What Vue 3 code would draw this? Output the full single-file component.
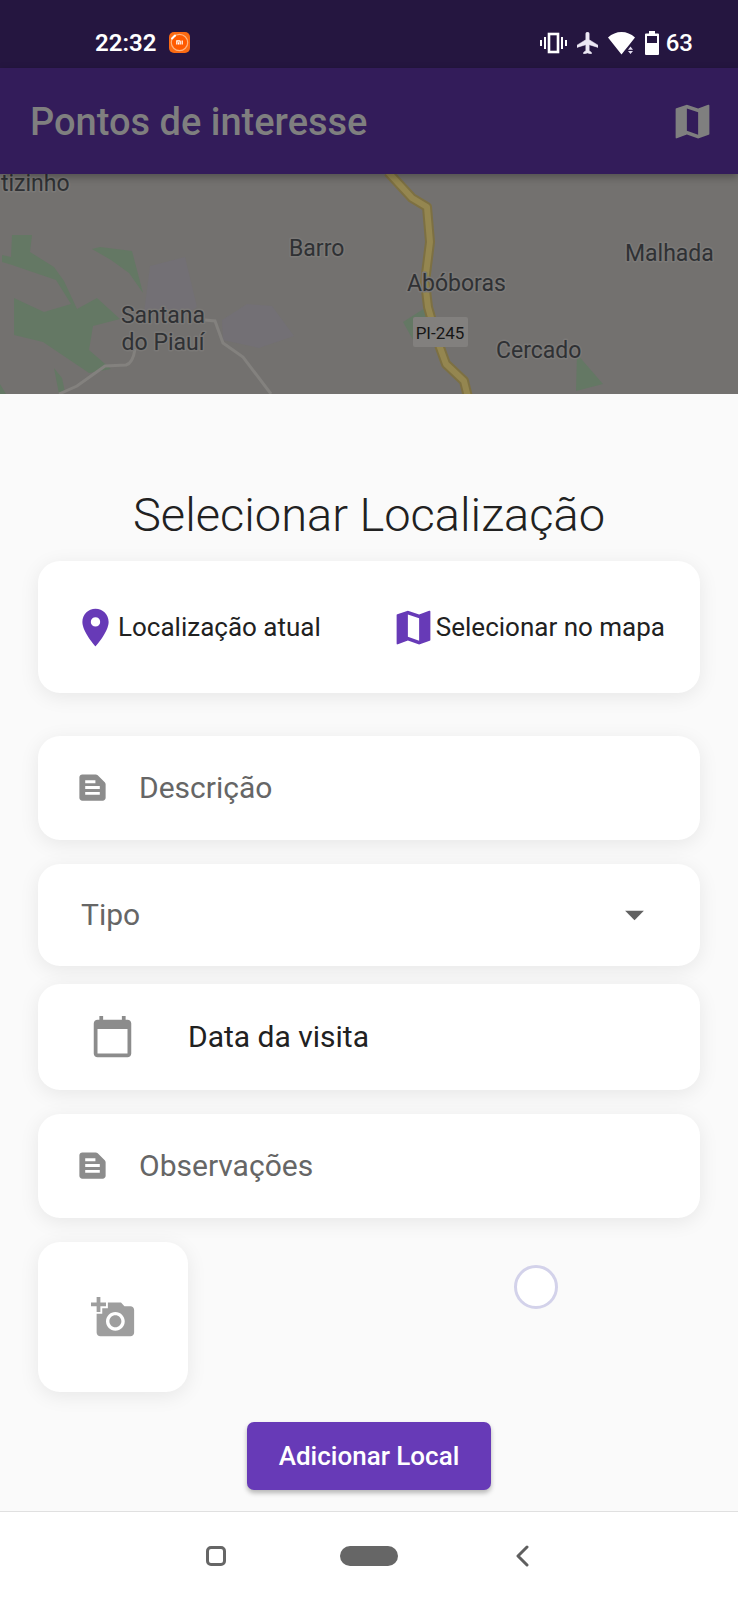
<script setup>
import { ref } from 'vue'

const descricao = ref('')
const tipo = ref('')
const observacoes = ref('')

const mapPath = 'M20.5 3l-.16.03L15 5.1 9 3 3.36 4.9c-.21.07-.36.25-.36.48V20.5c0 .28.22.5.5.5l.16-.03L9 18.9l6 2.1 5.64-1.9c.21-.07.36-.25.36-.48V3.5c0-.28-.22-.5-.5-.5zM15 19l-6-2.11V5l6 2.11V19z'
const notePath = 'M20.41 8.41l-4.83-4.83C15.21 3.21 14.7 3 14.17 3H5c-1.1 0-2 .9-2 2v14c0 1.1.9 2 2 2h14c1.1 0 2-.9 2-2V9.83c0-.53-.21-1.04-.59-1.42zM7 7h7v2H7V7zm10 10H7v-2h10v2zm0-4H7v-2h10v2z'
</script>

<template>
  <div class="screen">
    <header class="status-bar">
      <div class="status-left">
        <span class="status-text">22:32</span>
        <svg class="mi-icon" viewBox="0 0 21 21" aria-hidden="true">
          <rect width="21" height="21" rx="5" fill="#fb6a12" />
          <circle cx="10.500" cy="10.500" r="8.200" fill="#ff5a00" stroke="#ffb37e" stroke-width="1.200" />
          <path d="M3 6.500L6 3.500" stroke="#fff" stroke-width="2" stroke-linecap="round" />
          <path d="M7.800 12.500V8.800h2.600q.8 0 .8.800v2.900M9.500 10.300v2.200M13.200 8.500v4" fill="none" stroke="#fff" stroke-width="1.200" />
        </svg>
      </div>
      <div class="status-right">
        <div class="status-icons">
          <svg class="i-vibrate" viewBox="0 0 27 22" aria-hidden="true">
            <rect x="9" y="2" width="9" height="18" fill="none" stroke="#fff" stroke-width="2.600" />
            <path d="M1 8v6M5 5v12M22 5v12M26 8v6" stroke="#fff" stroke-width="2" />
          </svg>
          <svg class="i-plane" viewBox="2 2 19 20" preserveAspectRatio="none" aria-hidden="true">
            <path fill="#ece8f4" stroke="#ece8f4" stroke-width=".500" d="M21 16v-2l-8-5V3.500c0-.83-.67-1.500-1.500-1.500S10 2.670 10 3.500V9l-8 5v2l8-2.500V19l-2 1.500V22l3.500-1 3.500 1v-1.500L13 19v-5.500l8 2.500z" />
          </svg>
          <svg class="i-wifi" viewBox="0 0 27 24" aria-hidden="true">
            <path fill="#fff" d="M13.500 23.500L0 6.500Q6 1 13.500 1T27 6.500l-6.500 8.200-3.500 4.300z" />
            <path fill="#e4def0" d="M22.500 15.500l2.500 3.200h-5zM22.500 23l-2.500-3h5z" />
          </svg>
          <svg class="i-battery" viewBox="0 0 14 24" aria-hidden="true">
            <path fill="#fff" fill-rule="evenodd" d="M4 0h6v2.500h3q1 0 1 1V23q0 1-1 1H1q-1 0-1-1V3.500q0-1 1-1h3zM2 5v7h10V5z" />
          </svg>
        </div>
        <span class="status-text level">63</span>
      </div>
    </header>

    <div class="app-bar">
      <h1>Pontos de interesse</h1>
      <button type="button" class="plain" aria-label="Mapa">
        <svg class="icon" viewBox="0 0 24 24" aria-hidden="true"><path :d="mapPath" /></svg>
      </button>
    </div>

    <div class="map">
      <svg class="map-art" viewBox="0 0 738 220" preserveAspectRatio="xMinYMin slice" role="img" aria-label="Mapa da região">
        <rect width="738" height="220" fill="#73716f" />
        <g fill="#737075">
          <path d="M150 92l35-9 12 50-15 10-38-4z" />
          <path d="M222 146l25-16 25 2 22 30-35 12-36-8z" />
        </g>
        <g fill="#647864">
          <path d="M12 61h20l-2 17 24 15 10 14 13 28 20-11 23 21-27 7-4 24 22 19-22 4-46-31-29-7V124l30 14 27-8-15-24-44-15-10-3v-7l9 2z" />
          <path d="M92 75l8-2 32 4 11 42-14-20-18-13z" />
          <path d="M54 194l8 10 3 14-6 2zM0 210l6 10H0z" />
          <path d="M403 148l22-14 5 10-17 22zM577 180l26 30-27 7z" />
        </g>
        <g fill="none" stroke="#83817e" stroke-width="3">
          <path d="M59 220l18-8 28-20 21-1q7-2 9-16" />
          <path d="M205 146l10 1 8 22 20 14 28 37" />
        </g>
        <g fill="none" stroke-linejoin="round">
          <path d="M388-2l24 26 15 9 3 35-5 40 3 25 10 35 8 22 18 17 4 16" stroke="#7d7042" stroke-width="10" />
          <path d="M388-2l24 26 15 9 3 35-5 40 3 25 10 35 8 22 18 17 4 16" stroke="#948650" stroke-width="6" />
        </g>
        <rect x="413" y="143" width="55" height="30" rx="2" fill="#82807e" />
        <g class="place">
          <text x="1" y="17">tizinho</text>
          <text x="289" y="82">Barro</text>
          <text x="163" y="149" text-anchor="middle">Santana</text>
          <text x="163" y="176" text-anchor="middle">do Piauí</text>
          <text x="407" y="117">Abóboras</text>
          <text x="625" y="87">Malhada</text>
          <text x="496" y="184">Cercado</text>
        </g>
        <text class="road-label" x="440" y="165" text-anchor="middle">PI-245</text>
      </svg>
    </div>

    <main class="sheet">
      <h2>Selecionar Localização</h2>

      <div class="card location">
        <button type="button" class="plain">
          <svg class="icon" viewBox="0 0 24 24" aria-hidden="true"><path d="M12 2C8.130 2 5 5.130 5 9c0 5.250 7 13 7 13s7-7.750 7-13c0-3.870-3.130-7-7-7zm0 9.500a2.500 2.500 0 0 1 0-5 2.500 2.500 0 0 1 0 5z" /></svg>
          <span>Localização atual</span>
        </button>
        <button type="button" class="plain">
          <svg class="icon" viewBox="0 0 24 24" aria-hidden="true"><path :d="mapPath" /></svg>
          <span>Selecionar no mapa</span>
        </button>
      </div>

      <label class="card field first">
        <svg class="note" viewBox="0 0 24 24" aria-hidden="true"><path :d="notePath" /></svg>
        <input v-model="descricao" type="text" placeholder="Descrição" aria-label="Descrição" />
      </label>

      <div class="card field type">
        <select v-model="tipo" aria-label="Tipo">
          <option value="">Tipo</option>
        </select>
        <svg class="arrow icon" viewBox="0 0 24 24" aria-hidden="true"><path d="M7 10l5 5 5-5z" /></svg>
      </div>

      <button type="button" class="card field date">
        <svg class="icon" viewBox="0 0 24 24" aria-hidden="true"><path d="M20 3h-1V1h-2v2H7V1H5v2H4c-1.100 0-2 .9-2 2v16c0 1.100.9 2 2 2h16c1.100 0 2-.9 2-2V5c0-1.100-.9-2-2-2zm0 18H4V8h16v13z" /></svg>
        <span>Data da visita</span>
      </button>

      <label class="card field">
        <svg class="note" viewBox="0 0 24 24" aria-hidden="true"><path :d="notePath" /></svg>
        <input v-model="observacoes" type="text" placeholder="Observações" aria-label="Observações" />
      </label>

      <div class="photos">
        <button type="button" class="card photo" aria-label="Adicionar foto">
          <svg class="icon" viewBox="0 0 24 24" aria-hidden="true"><path d="M3 4V1h2v3h3v2H5v3H3V6H0V4h3zm3 6V7h3V4h7l1.830 2H21c1.100 0 2 .9 2 2v12c0 1.100-.9 2-2 2H5c-1.100 0-2-.9-2-2V10h3zm7 9c2.760 0 5-2.240 5-5s-2.240-5-5-5-5 2.240-5 5 2.240 5 5 5zm-3.200-5c0 1.770 1.430 3.200 3.200 3.200s3.200-1.430 3.200-3.200-1.430-3.200-3.200-3.200-3.200 1.430-3.200 3.200z" /></svg>
        </button>
        <span class="touch" aria-hidden="true"></span>
      </div>

      <button type="button" class="submit">Adicionar Local</button>
    </main>

    <nav class="system-nav">
      <button type="button" class="plain" aria-label="Recentes"><span class="recent"></span></button>
      <button type="button" class="plain" aria-label="Início"><span class="home"></span></button>
      <button type="button" class="plain" aria-label="Voltar">
        <svg class="back" viewBox="0 0 14 22" aria-hidden="true"><path d="M12 2L3 11l9 9" fill="none" stroke="#5f5f5f" stroke-width="3" stroke-linecap="round" stroke-linejoin="round" /></svg>
      </button>
    </nav>
  </div>
</template>

<style>
body {
  background: #fafafa;
}
</style>

<style scoped>
.screen {
  display: flex;
  flex-direction: column;
  min-height: 100vh;
  font-family: Roboto, "Liberation Sans", sans-serif;
  color: #212121;
}

.screen *,
.screen {
  box-sizing: border-box;
}

.plain {
  display: flex;
  align-items: center;
  padding: 0;
  border: 0;
  background: none;
  color: inherit;
  font: inherit;
}

.icon {
  display: block;
  flex: none;
  width: 45px;
  height: 45px;
  fill: currentColor;
}

.status-bar {
  display: flex;
  justify-content: space-between;
  align-items: center;
  height: 68px;
  padding: 17px 45px 0 95px;
  background: #251640;
  color: #fff;
}

.status-left,
.status-right,
.status-icons {
  display: flex;
  align-items: center;
}

.status-left {
  gap: 13px;
}

.status-right {
  gap: 7px;
}

.status-icons {
  gap: 10px;
}

.status-text {
  font-size: 24px;
  font-weight: 600;
  line-height: 28px;
}

.level {
  font-weight: 500;
}

.mi-icon {
  width: 21px;
  height: 21px;
}

.i-vibrate {
  width: 27px;
  height: 22px;
}

.i-plane {
  width: 21px;
  height: 22px;
}

.i-wifi {
  width: 27px;
  height: 24px;
}

.i-battery {
  width: 14px;
  height: 24px;
}

.app-bar {
  position: relative;
  z-index: 1;
  display: flex;
  justify-content: space-between;
  align-items: center;
  height: 106px;
  padding: 0 23px 0 30px;
  background: #331c5a;
  color: #7f7f7f;
  box-shadow: 0 3px 8px rgba(0, 0, 0, 0.3);
}

h1 {
  margin: 0;
  padding-top: 2px;
  font-size: 38px;
  font-weight: 500;
  line-height: 44px;
}

.map {
  height: 220px;
  overflow: hidden;
  background: #73716f;
}

.map-art {
  display: block;
  width: 100%;
  height: 100%;
}

.place {
  font-size: 23px;
  fill: #2f3134;
  stroke: #7b7977;
  stroke-width: 3px;
  stroke-linejoin: round;
  paint-order: stroke;
}

.road-label {
  font-size: 17px;
  fill: #161616;
}

.sheet {
  display: flex;
  flex: 1;
  flex-direction: column;
  padding: 94px 38px 21px;
  background: #fafafa;
}

h2 {
  margin: 0 0 19px;
  font-size: 47px;
  font-weight: 300;
  line-height: 54px;
  text-align: center;
}

.card {
  border: 0;
  border-radius: 22px;
  background: #fff;
  box-shadow: 0 4px 20px rgba(0, 0, 0, 0.08);
}

.location {
  display: flex;
  justify-content: space-around;
  align-items: center;
  height: 132px;
  font-size: 26px;
}

.location .icon {
  color: #673ab7;
}

.field {
  display: flex;
  align-items: center;
  height: 104px;
  margin-top: 24px;
  padding: 0 37px 2px;
  font-family: inherit;
  font-size: 30px;
}

.field.first {
  margin-top: 43px;
}

.field input,
.field select {
  flex: 1;
  width: 100%;
  min-width: 0;
  padding: 0;
  border: 0;
  outline: 0;
  background: none;
  color: #666;
  font: inherit;
}

.field input::placeholder {
  color: #666;
  opacity: 1;
}

.field select {
  appearance: none;
}

.note {
  flex: none;
  width: 35px;
  height: 35px;
  margin-right: 29px;
  fill: #8c8c8c;
}

.field.type {
  height: 102px;
  padding: 0 43px 2px;
}

.arrow {
  color: #616161;
  pointer-events: none;
}

.field.date {
  height: 106px;
  margin-top: 18px;
  padding: 0 52px 2px;
  gap: 53px;
  color: #212121;
  text-align: left;
}

.field.date .icon {
  color: #8c8c8c;
}

.photos {
  position: relative;
  margin-top: 24px;
}

.photo {
  display: flex;
  justify-content: center;
  align-items: center;
  width: 150px;
  height: 150px;
  padding: 0;
  color: #9e9e9e;
}

.touch {
  position: absolute;
  top: 23px;
  right: 142px;
  width: 44px;
  height: 44px;
  border: 3px solid #d3d2ea;
  border-radius: 50%;
  background: #fff;
}

.submit {
  align-self: center;
  height: 68px;
  margin-top: 30px;
  padding: 0 32px;
  border: 0;
  border-radius: 7px;
  background: #673ab7;
  color: #fff;
  font-family: inherit;
  font-size: 26px;
  font-weight: 500;
  box-shadow: 0 3px 5px rgba(0, 0, 0, 0.28);
}

.system-nav {
  display: flex;
  justify-content: center;
  align-items: center;
  gap: 95px;
  height: 89px;
  border-top: 1px solid #e0e0e0;
  background: #fff;
}

.system-nav .plain {
  justify-content: center;
  width: 58px;
  height: 48px;
}

.recent {
  width: 20px;
  height: 20px;
  border: 3px solid #666;
  border-radius: 5px;
}

.home {
  width: 58px;
  height: 20px;
  border-radius: 10px;
  background: #666;
}

.back {
  width: 14px;
  height: 22px;
}
</style>
